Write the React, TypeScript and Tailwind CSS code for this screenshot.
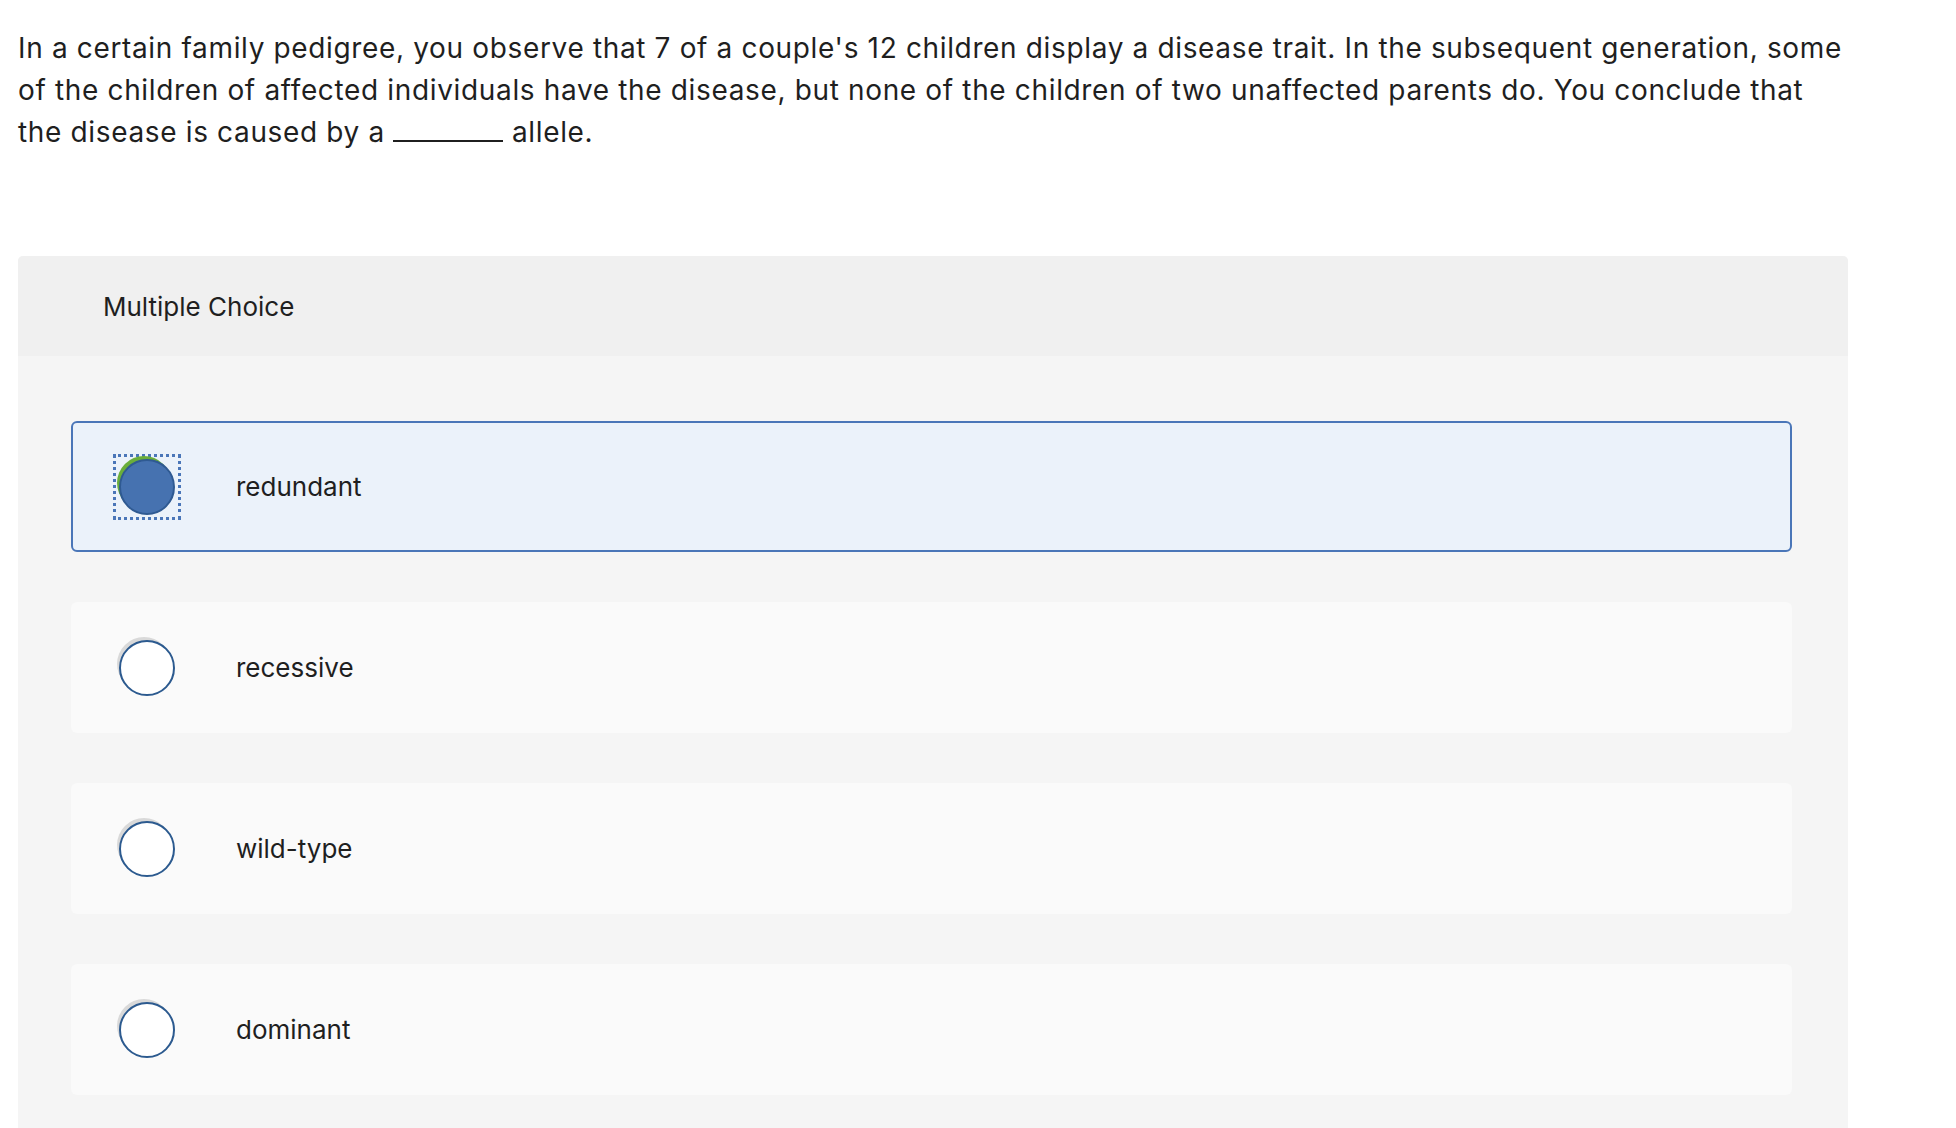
import React, { useState } from 'react';

const options = ['redundant', 'recessive', 'wild-type', 'dominant'];

const Radio: React.FC<{ checked: boolean }> = ({ checked }) => (
  <div
    className={
      'w-[68px] h-[66px] flex items-center justify-center ' +
      (checked ? 'border-[3px] border-dotted border-[#4a76b8]' : 'border-[3px] border-transparent')
    }
  >
    <div className="relative w-[56px] h-[56px]">
      <div
        className={
          'absolute left-[-2px] top-[-3px] w-[54px] h-[54px] rounded-full ' +
          (checked ? 'bg-[#6aae3a]' : 'bg-[#d9d9d9]')
        }
      />
      <div
        className={
          'absolute inset-0 rounded-full border-2 ' +
          (checked ? 'bg-[#4672b0] border-[#2f5a92]' : 'bg-white border-[#2c5a8f]')
        }
      />
    </div>
  </div>
);

export default function App() {
  const [selected, setSelected] = useState(0);

  return (
    <div className="min-h-screen bg-white pl-[18px] pt-[27px] font-['Inter','Liberation_Sans',sans-serif] text-[#1f1f1f]">
      {/* Question */}
      <p className="text-[28px] leading-[42px] tracking-[0.65px] w-[1830px]">
        In a certain family pedigree, you observe that 7 of a couple's 12 children display a disease trait. In the subsequent generation, some of the children of affected individuals have the disease, but none of the children of two unaffected parents do. You conclude that the disease is caused by a{' '}
        <span className="inline-block w-[110px] border-b-2 border-[#1f1f1f]"></span>{' '}allele.
      </p>

      {/* Answer box */}
      <div className="mt-[103px] w-[1830px] rounded-t-[5px] bg-[#f5f5f5] overflow-hidden">
        <div className="h-[100px] bg-[#f0f0f0] flex items-center pl-[85px] text-[26px]">
          Multiple Choice
        </div>
        <div className="pl-[53px] pr-[56px] pt-[65px] pb-[50px] flex flex-col gap-[50px]">
          {options.map((opt, i) => {
            const checked = i === selected;
            return (
              <div
                key={opt}
                onClick={() => setSelected(i)}
                className={
                  'h-[131px] rounded-[6px] flex items-center pl-[40px] cursor-pointer ' +
                  (checked ? 'bg-[#ebf2fa] border-2 border-[#4a76b8]' : 'bg-[#fafafa] border-2 border-transparent')
                }
              >
                <Radio checked={checked} />
                <span className="ml-[55px] text-[26px]">{opt}</span>
              </div>
            );
          })}
        </div>
      </div>
    </div>
  );
}
